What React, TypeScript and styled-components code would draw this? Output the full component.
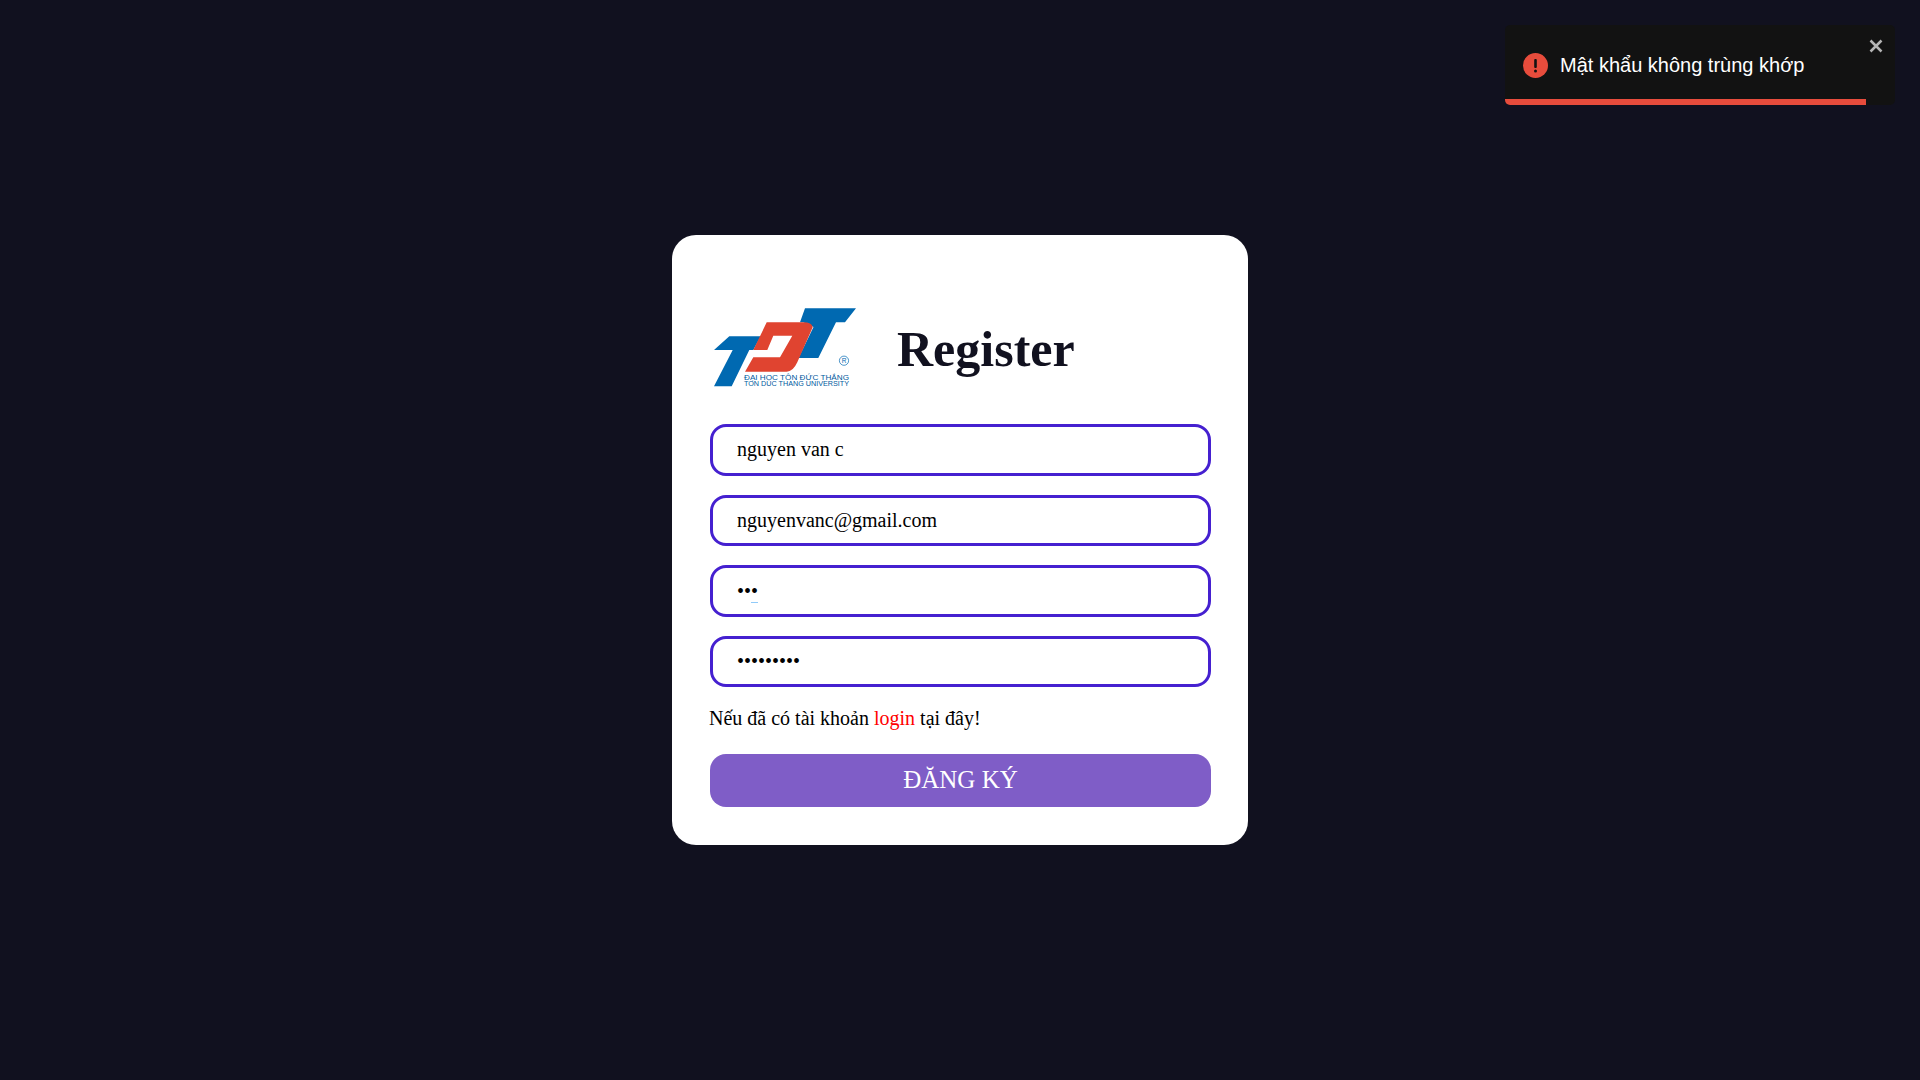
import * as React from 'react';
import styled, { createGlobalStyle } from 'styled-components';

const GlobalStyle = createGlobalStyle`
  html, body {
    margin: 0;
    padding: 0;
    background-color: #11111f;
  }
`;

const Page = styled.div`
  min-height: 100vh;
  display: flex;
  align-items: center;
  justify-content: center;
  font-family: 'Liberation Serif', 'Times New Roman', serif;
`;

const Card = styled.form`
  box-sizing: border-box;
  width: 576px;
  height: 610px;
  padding: 70px 37px 0 38px;
  background-color: #fff;
  border-radius: 24px;
`;

const Header = styled.div`
  display: flex;
  align-items: center;
  height: 88px;
  margin-bottom: 31px;
`;

const Logo = styled.svg`
  width: 150px;
  height: 100px;
  flex-shrink: 0;
`;

const Title = styled.h1`
  margin: 0 0 0 37px;
  font-size: 50px;
  font-weight: 700;
  color: #11111f;
`;

const Field = styled.div`
  position: relative;
  margin-bottom: 19.17px;
`;

const Input = styled.input`
  display: block;
  box-sizing: border-box;
  width: 100%;
  height: 51.5px;
  padding: 0 24px;
  border: 3px solid #4520d0;
  border-radius: 16px;
  outline: none;
  font-family: inherit;
  font-size: 20px;
  color: #000;
`;

const CaretMark = styled.span`
  position: absolute;
  left: 41px;
  top: 37px;
  width: 7px;
  height: 1px;
  background-color: #90caf9;
`;

const Hint = styled.p`
  margin: 0 0 24px -1px;
  font-size: 20px;
  line-height: 23px;
  color: #000;
`;

const LoginLink = styled.a`
  color: #f00;
  text-decoration: none;
`;

const Submit = styled.button`
  display: block;
  width: 100%;
  height: 53px;
  border: none;
  border-radius: 16px;
  background-color: #7f5dc7;
  color: #fff;
  font-family: inherit;
  font-size: 25px;
`;

const Toast = styled.div`
  position: absolute;
  top: 25px;
  right: 25px;
  box-sizing: border-box;
  width: 390px;
  height: 80px;
  display: flex;
  align-items: center;
  gap: 12px;
  padding: 0 18px;
  border-radius: 5px;
  background-color: #121212;
  color: #fff;
  font-family: 'Liberation Sans', Arial, sans-serif;
  font-size: 20px;
  overflow: hidden;
`;

const ToastClose = styled.span`
  position: absolute;
  top: 11px;
  right: 11px;
  width: 16px;
  height: 16px;
  color: #b4b4b4;
`;

const ToastProgress = styled.div`
  position: absolute;
  left: 0;
  bottom: 0;
  height: 6px;
  background-color: #e74c3c;
`;

const App = () => (
  <>
    <GlobalStyle />
    <Page>
      <Card>
        <Header>
          <Logo viewBox="0 0 150 100">
            <polygon
              fill="#0069b1"
              points="19.3,37.3 50.7,37.3 43.3,51 39.3,51 21.7,87.3 4,87.3 22.7,51 4,51"
            />
            <polygon
              fill="#0069b1"
              points="95,9.3 146,9.3 135,23.3 126,23.3 108.3,59 88.5,59 103.5,28 93.3,23.3 90,23.3"
            />
            <path
              fill="#e04430"
              d="M56.7 23.3H93.3Q102 23.3 102.7 28.3L87.3 63.3Q83 72.7 76.7 72.7H35L43.3 58.3H70L82.3 36.7H63.3L57.3 51H43.3Z"
            />
            <circle cx="134" cy="61.7" r="4.6" fill="none" stroke="#0069b1" strokeWidth="0.7" />
            <text x="134" y="64" fontSize="6.5" fill="#0069b1" textAnchor="middle" fontFamily="Liberation Sans">R</text>
            <text x="34" y="80.5" fontSize="7.2" fill="#005a9e" textLength="105" lengthAdjust="spacingAndGlyphs" fontFamily="Liberation Sans">ĐẠI HỌC TÔN ĐỨC THẮNG</text>
            <text x="34" y="87.3" fontSize="7.2" fill="#005a9e" textLength="105" lengthAdjust="spacingAndGlyphs" fontFamily="Liberation Sans">TON DUC THANG UNIVERSITY</text>
          </Logo>
          <Title>Register</Title>
        </Header>
        <Field>
          <Input type="text" readOnly value="nguyen van c" />
        </Field>
        <Field>
          <Input type="email" readOnly value="nguyenvanc@gmail.com" />
        </Field>
        <Field>
          <Input type="password" readOnly value="123" />
          <CaretMark />
        </Field>
        <Field>
          <Input type="password" readOnly value="123456789" />
        </Field>
        <Hint>
          Nếu đã có tài khoản <LoginLink href="#">login</LoginLink> tại đây!
        </Hint>
        <Submit type="button">ĐĂNG KÝ</Submit>
      </Card>
    </Page>
    <Toast>
      <svg width="25" height="25" viewBox="0 0 25 25">
        <circle cx="12.5" cy="12.5" r="12.5" fill="#e74c3c" />
        <rect x="11.2" y="6" width="2.6" height="9" rx="1" fill="#121212" />
        <circle cx="12.5" cy="18" r="1.5" fill="#121212" />
      </svg>
      Mật khẩu không trùng khớp
      <ToastClose>
        <svg width="16" height="16" viewBox="0 0 16 16">
          <path d="M2.5 2.5L13.5 13.5M13.5 2.5L2.5 13.5" stroke="currentColor" strokeWidth="2.5" fill="none" />
        </svg>
      </ToastClose>
      <ToastProgress style={{ width: `${(361 / 390) * 100}%` }} />
    </Toast>
  </>
);

export default App;
